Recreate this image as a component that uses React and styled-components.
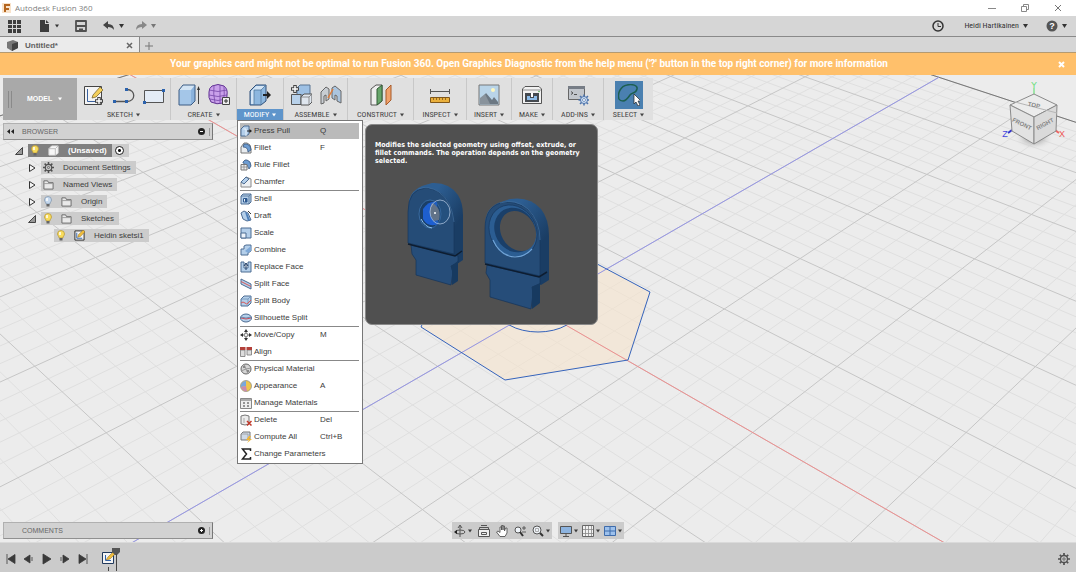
import React from "react";
import styled, { createGlobalStyle, css } from "styled-components";

const GlobalStyle = createGlobalStyle`
    *{
        box-sizing:border-box;
    }
    body{
        margin:0;
        font-family:"Liberation Sans", Arial, sans-serif;
        font-size:8px;
        line-height:12px;
        color:#3c3c3c;
        background-color:#ececec;
    }
    button{
        font:inherit;
        color:inherit;
        border:0;
        padding:0;
        margin:0;
        background:none;
        display:flex;
        align-items:center;
        cursor:pointer;
    }
    svg{
        display:block;
        flex:none;
    }
    ul{
        list-style:none;
        margin:0;
        padding:0;
    }
`;

const Window = styled.div`
    display:flex;
    flex-direction:column;
    min-height:100vh;
`;

const TitleBar = styled.header`
    display:flex;
    align-items:center;
    gap:4px;
    height:16px;
    padding:0 14px 0 2px;
    background-color:#ffffff;
`;

const AppName = styled.h1`
    flex:1;
    margin:0;
    font-family:"Open Sans", "Noto Sans", sans-serif;
    font-size:8px;
    font-weight:400;
    color:#808080;
`;

const WindowButtons = styled.div`
    display:flex;
    gap:25px;
`;

const AppBar = styled.div`
    display:flex;
    align-items:center;
    height:21px;
    padding:0 9px 0 8px;
    background-color:#d6d6d6;
    border-bottom:1px solid #8a8a8a;
`;

const QuickButton = styled.button`
    gap:4px;
    margin-right:${props => props.$after || 0}px;
    color:${props => (props.$faded ? "#777777" : "#333333")};
`;

const UserName = styled.span`
    font-family:"Liberation Sans Narrow", "Roboto Condensed", "Liberation Sans", sans-serif;
    font-size:8px;
`;

const Spacer = styled.div`
    flex:1;
`;

const TabBar = styled.div`
    display:flex;
    height:15px;
    background-color:#d6d6d6;
`;

const Tab = styled.div`
    display:flex;
    align-items:center;
    gap:7px;
    width:140px;
    padding:2px 6px 0 7px;
    font-weight:700;
    color:#606060;
    background-color:#ebebeb;
    border-right:1px solid #888888;
`;

const TabName = styled.span`
    flex:1;
`;

const NewTab = styled.button`
    padding:2px 5px 0 5px;
`;

const Banner = styled.div`
    display:flex;
    align-items:center;
    height:23px;
    padding-right:11px;
    color:#ffffff;
    background-color:#ffc06b;
    border-top:1px solid #b59a70;
`;

const BannerText = styled.p`
    flex:1;
    margin:0;
    text-align:center;
    font-family:Roboto, "Liberation Sans", sans-serif;
    font-size:10px;
    font-weight:700;
`;

const Canvas = styled.main`
    position:relative;
    display:flex;
    flex-direction:column;
    flex:1;
    padding:3px;
    background-color:#ececec;
`;

const Scene = styled.svg`
    position:absolute;
    inset:0;
    width:100%;
    height:100%;
`;

const CubeBox = styled.div`
    position:absolute;
    top:3px;
    right:6px;
`;

const Toolbar = styled.nav`
    position:relative;
    z-index:2;
    display:flex;
    align-self:flex-start;
    height:42px;
    background-color:#e0e0e0;
`;

const Workspace = styled.button`
    gap:6px;
    width:74px;
    padding-left:5px;
    font-size:7px;
    font-weight:700;
    color:#ffffff;
    background-color:#a9a9a9;
`;

const WorkspaceName = styled.span`
    padding-left:9px;
`;

const Group = styled.div`
    position:relative;
    display:flex;
    flex-direction:column;
    align-items:stretch;
    width:${props => props.$width}px;
    border-right:1px solid #c8c8c8;
    &:last-of-type{
        border-right:0;
    }
`;

const Tools = styled.div`
    display:flex;
    justify-content:center;
    align-items:center;
    gap:8px;
    height:31px;
    padding-top:2px;
`;

const Tool = styled.button`
    justify-content:center;
    width:22px;
    height:22px;
    ${props => props.$active && css`
        width:28px;
        height:28px;
        background-color:#4a80b0;
    `}
`;

const GroupLabel = styled.button`
    justify-content:center;
    gap:3px;
    height:11px;
    font-family:"Liberation Sans Narrow", "Roboto Condensed", "Liberation Sans", sans-serif;
    font-size:8px;
    line-height:11px;
    color:${props => (props.$open ? "#ffffff" : "#444444")};
    background-color:${props => (props.$open ? "#5f95cb" : "transparent")};
`;

const Menu = styled.ul`
    position:absolute;
    top:100%;
    left:0;
    width:126px;
    padding:1px 3px 1px 2px;
    background-color:#ffffff;
    border:1px solid #777777;
`;

const MenuItem = styled.li`
    height:17px;
    border-top:1px solid ${props => (props.$divided ? "#888888" : "transparent")};
    background-color:${props => (props.$active ? "#bababa" : "transparent")};
    background-clip:padding-box;
`;

const MenuButton = styled.button`
    gap:2px;
    width:100%;
    height:16px;
`;

const MenuText = styled.span`
    width:64px;
    white-space:nowrap;
    text-align:left;
`;

const Tooltip = styled.div`
    position:absolute;
    top:3px;
    left:127px;
    width:233px;
    height:201px;
    padding:16px 9px 0;
    color:#ffffff;
    background-color:#505050;
    border:1px solid #8a8a8a;
    border-radius:7px;
`;

const TooltipText = styled.p`
    margin:0 0 13px;
    font-family:"DejaVu Sans Condensed", "DejaVu Sans", sans-serif;
    font-size:7px;
    font-weight:700;
    line-height:8px;
`;

const PanelBar = styled.div`
    position:relative;
    display:flex;
    align-items:center;
    width:210px;
    height:17px;
    padding:0 0 0 3px;
    gap:4px;
    color:#666666;
    background-color:#d2d2d2;
    border:1px solid #b0b0b0;
    border-right-color:#777777;
    border-bottom-color:#909090;
`;

const PanelTitle = styled.h2`
    flex:1;
    margin:0;
    padding-left:${props => (props.$inset ? "15px" : "4px")};
    font-size:7px;
    font-weight:400;
`;

const Grip = styled.span`
    width:3px;
    height:8px;
    border-left:1px solid #999999;
`;

const Browser = styled.section`
    position:relative;
    margin-top:3px;
`;

const Tree = styled.ul`
    display:flex;
    flex-direction:column;
    gap:4px;
    padding:4px 0 0 12px;
`;

const TreeRow = styled.li`
    display:flex;
    align-items:center;
    height:13px;
    padding-left:${props => props.$level * 13}px;
`;

const Toggle = styled.button`
    justify-content:center;
    width:13px;
    height:13px;
    padding-right:5px;
`;

const Node = styled.div`
    display:flex;
    align-items:center;
    height:13px;
    padding:0 5px 0 2px;
    gap:8px;
    background-color:#cccccc;
    ${props => props.$root && css`
        font-weight:700;
        color:#ffffff;
        background-color:#808080;
    `}
`;

const NodeName = styled.span`
    padding-left:1px;
`;

const RootState = styled.label`
    display:flex;
    align-items:center;
    height:13px;
    padding:0 5px 0 3px;
    background-color:#cccccc;
`;

const Radio = styled.input`
    appearance:none;
    width:9px;
    height:9px;
    margin:0;
    border:1px solid #222222;
    border-radius:50%;
    background:radial-gradient(#111111 0 1px, #ffffff 2px);
`;

const CanvasFooter = styled.div`
    position:relative;
    display:flex;
    align-items:center;
    margin-top:auto;
`;

const NavBars = styled.div`
    display:flex;
    gap:6px;
    margin-left:239px;
`;

const NavBar = styled.div`
    display:flex;
    align-items:center;
    justify-content:space-between;
    height:17px;
    padding:0 2px;
    gap:${props => props.$gap}px;
    background-color:#cbcbcb;
`;

const NavButton = styled.button`
    gap:2px;
`;

const Timeline = styled.footer`
    display:flex;
    align-items:center;
    height:30px;
    padding:3px 6px 0 5px;
    background-color:#cbcbcb;
    border-top:1px solid #dadada;
`;

const Playback = styled.div`
    display:flex;
    gap:6px;
    margin-right:12px;
`;

/* ground grid: origin and the two vanishing points of its axes */
const ORIGIN = [537.5, 308.8];
const VANISH_X = [-939, -540];
const VANISH_Z = [1957, -510];

const project = (x, z) => {
    const a = x * -0.0636;
    const b = z * 0.0657;
    const w = 1 + a + b;
    return [0, 1].map(i => ((a * VANISH_X[i] + b * VANISH_Z[i] + ORIGIN[i]) / w).toFixed(1));
};

const gridPath = major => {
    let d = "";
    for (let i = -30; i <= 30; i++) {
        if ((i % 5 === 0) === major) {
            const n = i / 5;
            d += `M${project(n, -6)}L${project(n, 6)}M${project(-6, n)}L${project(6, n)}`;
        }
    }
    return d;
};

const MINOR = gridPath(false);
const MAJOR = gridPath(true);

const Ground = () => (
    <Scene viewBox="0 75 1076 467" preserveAspectRatio="xMinYMin slice" fill="none" aria-hidden="true">
        <path d={MINOR} stroke="#dfdfdf" />
        <path d={MAJOR} stroke="#c6c6c6" />
        <path d={`M${project(-6, -6)}L${project(-6, 6)}L${project(6, 6)}`} stroke="#777777" />
        <path d="M650 292L628 360L505 380L421 327L450 262L567 248Z" fill="#f7e3cb" fillOpacity="0.55" />
        <path d={`M${project(-6, 0)}L${project(6, 0)}`} stroke="#ee9090" />
        <path d={`M${project(0, -6)}L${project(0, 6)}`} stroke="#9696e6" />
        <path d="M650 292L628 360L505 380L421 327L450 262L567 248Z" stroke="#3563bb" />
        <ellipse cx="538" cy="309" rx="40" ry="23" stroke="#3563bb" />
    </Scene>
);

const ViewCube = () => (
    <CubeBox>
        <svg width="70" height="75" viewBox="1000 78 70 75" fontFamily="Liberation Sans, sans-serif">
            <defs>
                <radialGradient id="cubeShade">
                    <stop offset="0" stopColor="#777777" />
                    <stop offset="1" stopColor="#ececec" stopOpacity="0" />
                </radialGradient>
            </defs>
            <ellipse cx="1034" cy="138" rx="20" ry="12" fill="url(#cubeShade)" />
            <path d="M1034 94V88" stroke="#55dd66" />
            <path d="M1012 130L1008 133" stroke="#3333cc" strokeWidth="2" />
            <path d="M1055 130L1059 133" stroke="#ee6666" strokeWidth="2" />
            <g stroke="#8a8a8a" strokeLinejoin="round">
                <path d="M1034 94L1057 105L1034 117L1010 105Z" fill="#ececec" />
                <path d="M1010 105L1034 117V144L1012 131Z" fill="#e2e2e2" />
                <path d="M1057 105L1034 117V144L1056 131Z" fill="#dadada" />
            </g>
            <path d="M1015 102L1057 113" stroke="#b5b5b5" />
            <g fontSize="6" fill="#858585" fontWeight="700" textAnchor="middle">
                <text x="1022" y="126" transform="rotate(26 1022 124)">FRONT</text>
                <text x="1045" y="126" transform="rotate(-28 1045 124)">RIGHT</text>
                <text x="1034" y="107" transform="rotate(12 1034 105)">TOP</text>
            </g>
            <g fontSize="9" textAnchor="middle">
                <text x="1034" y="88" fill="#66dd77">Y</text>
                <text x="1005" y="137" fill="#4444dd">Z</text>
                <text x="1062" y="137" fill="#ee5555">X</text>
            </g>
        </svg>
    </CubeBox>
);

const Caret = ({ size = 5 }) => (
    <svg width={size} height="4" viewBox="0 0 5 4" fill="currentColor" aria-hidden="true">
        <path d="M0 0H5L2.500 4Z" />
    </svg>
);

const Icon = ({ size = 12, box = 12, children }) => (
    <svg width={size} height={size} viewBox={`0 0 ${box} ${box}`} fill="none" strokeLinejoin="round" aria-hidden="true">
        {children}
    </svg>
);

/* toolbar drawings, on a 22px box */
const toolIcons = {
    "Create Sketch": (
        <>
            <path d="M1.500 2.500H18.500V20.500H1.500Z" fill="#f4f4f4" stroke="#444444" />
            <path d="M4.500 5V17.500H16" stroke="#3a62a0" />
            <path d="M9 14L10 11L17 3L20 6L13 13Z" fill="#f3cf5b" stroke="#6b5a28" strokeWidth="0.7" />
            <path d="M16 13V21M12 17H20" stroke="#444444" strokeWidth="3.500" />
            <path d="M16 14V20M13 17H19" stroke="#ffffff" strokeWidth="1.500" />
        </>
    ),
    "Arc": (
        <>
            <path d="M2 17.500H14C23 17.500 23 5.500 14 5.500" stroke="#555555" strokeWidth="1.300" />
            <path d="M0 16H3V19H0ZM12 16H15V19H12ZM12 4H15V7H12Z" fill="#2b62ad" />
        </>
    ),
    "Rectangle": (
        <>
            <path d="M1.500 6.500H20.500V18.500H1.500Z" fill="#e4ecf6" stroke="#555555" />
            <path d="M0 17H3V20H0ZM19 5H22V8H19Z" fill="#2b62ad" />
        </>
    ),
    "Extrude": (
        <>
            <path d="M1 6H13V21L17 17V1H5Z" fill="#8ab2dc" />
            <path d="M1 6H13L17 1H5Z" fill="#d3e4f4" />
            <path d="M1 6H13V21H1Z" fill="#a4c6e8" />
            <path d="M1 6L5 1H17V17L13 21H1Z" stroke="#3c5c84" />
            <path d="M20.500 20V5" stroke="#444444" />
            <path d="M19 6L20.500 2L22 6Z" fill="#333333" />
        </>
    ),
    "Create Form": (
        <>
            <path d="M4 2Q10 -1 16 2Q20 5 19 11Q19 18 15 19Q9 21 3 18Q0 14 1 8Q1 4 4 2Z" fill="#c9a0ea" stroke="#613392" />
            <path d="M6 1Q5 10 7 19M12 1Q12 10 12 20M16 2Q17 10 15 19M1 6Q10 9 19 6M1 11Q10 14 19 11M2 15Q10 18 18 15" stroke="#7648a8" strokeWidth="0.8" />
            <path d="M14.500 13.500H21.500V20.500H14.500Z" fill="#eeeeee" stroke="#444444" />
            <path d="M16 17H20M18 15V19" stroke="#333333" />
        </>
    ),
    "Press Pull": (
        <>
            <path d="M1 7L7 1H17V17L12 21H1Z" fill="#8db7df" stroke="#2f4f78" />
            <path d="M2 7L7 2H16L12 6H5V20H2Z" fill="#d4e5f5" />
            <path d="M5 6H12V21M12 6L17 1M5 6V21" stroke="#52789f" strokeWidth="0.8" />
            <path d="M14 10H18V7L22 11L18 15V12H14Z" fill="#222222" />
        </>
    ),
    "New Component": (
        <>
            <path d="M7 4L10 1H20V11H7Z" fill="#9dc0e4" stroke="#5a7492" />
            <path d="M1.500 10.500H11V20.500H1.500Z" fill="#b8d1ea" stroke="#555555" />
            <path d="M11 13L14 10H22V18L19 21H11Z" fill="#dfe6ee" stroke="#555555" />
            <path d="M11 13H19V21M19 13L22 10" stroke="#777777" strokeWidth="0.8" />
            <path d="M5 1V9M1 5H9" stroke="#444444" strokeWidth="3.500" />
            <path d="M5 2V8M2 5H8" stroke="#ffffff" strokeWidth="1.500" />
        </>
    ),
    "Joint": (
        <>
            <path d="M1 8L6 3L9 5V15L6 17V11L4 12V19L1 20Z" fill="#c8cdd2" stroke="#666666" />
            <path d="M12 4L15 2L21 7V19L17 17V12L15 11V16L12 14Z" fill="#abc5df" stroke="#666666" />
            <path d="M8 14L13 5" stroke="#de7c3b" strokeWidth="1.500" />
        </>
    ),
    "Offset Plane": (
        <>
            <path d="M1 5L6 1H12V17L7 21H1Z" fill="#eeeeee" stroke="#555555" />
            <path d="M7 5L12 1V17L7 21Z" fill="#67a66b" stroke="#335c37" />
            <path d="M16 6L21 1V16L16 21Z" fill="#f0a26b" stroke="#a75b2b" />
        </>
    ),
    "Measure": (
        <>
            <path d="M1.500 5V10M20.500 5V10M1 7.500H21" stroke="#555555" />
            <path d="M1.500 13.500H20.500V18.500H1.500Z" fill="#eab03c" stroke="#80571b" />
            <path d="M4.500 14V16M7.500 14V16M10.500 14V16M13.500 14V16M16.500 14V16" stroke="#80571b" strokeWidth="0.8" />
        </>
    ),
    "Insert Image": (
        <>
            <path d="M1 1H21V21H1Z" fill="#b9d4e8" stroke="#777777" />
            <path d="M2 17L8 9L14 16L16 13L20 18V20H2Z" fill="#6c7883" />
            <path d="M2 14L7 10L12 20H2Z" fill="#89939c" />
            <circle cx="15" cy="6" r="2" fill="#fdf7c0" />
        </>
    ),
    "3D Print": (
        <>
            <path d="M1.500 5L4 2.500H18L20.500 5V19.500H1.500Z" fill="#f2f2f2" stroke="#555555" />
            <path d="M2 6H20" stroke="#777777" strokeWidth="0.8" />
            <path d="M4 9H18V18H4Z" fill="#454a50" />
            <path d="M6 12H9V14H13V12H16V16H6Z" fill="#8cbbe8" />
            <path d="M10 9H12V13H10Z" fill="#ffffff" />
            <circle cx="18" cy="7.500" r="0.800" fill="#55aa55" />
        </>
    ),
    "Scripts and Add-Ins": (
        <>
            <path d="M1.500 2.500H17.500V15.500H1.500Z" fill="#c2c6cc" stroke="#666666" />
            <path d="M1 2H18V5H1Z" fill="#777d86" />
            <path d="M4 7.500L6 9L4 10.500M7 10.500H10" stroke="#444444" strokeWidth="0.9" />
            <path d="M17 10.500V21.500M11.500 16H22.500M13 12L21 20M21 12L13 20" stroke="#4a72ac" strokeWidth="1.500" />
            <circle cx="17" cy="16" r="3.500" fill="#d5e4f5" stroke="#4a72ac" />
            <circle cx="17" cy="16" r="1.500" fill="#ffffff" stroke="#4a72ac" strokeWidth="0.7" />
        </>
    ),
    "Select": (
        <>
            <path d="M1 15C-1 9 3 2 9 1C14 0 20 1 19 5C18 10 14 8 12 11C10 14 8 17 5 17C3 17 2 17 1 15Z" stroke="#1d5f50" strokeWidth="1.500" />
            <path d="M16 10V20L18 18L20 22L22 21L20 17H23Z" fill="#ffffff" stroke="#222222" strokeWidth="0.7" />
        </>
    )
};

const blue = { fill: "#b4cfea", stroke: "#4d6c92" };

/* menu drawings, on a 12px box */
const menuIcons = {
    pull: (
        <>
            <path d="M1 4L4 1H9V9L6 11H1Z" {...blue} />
            <path d="M3.500 4H6V11" stroke="#e8f2fc" />
            <path d="M7 5.500H9.500V4L12 6L9.500 8V6.500H7Z" fill="#222222" />
        </>
    ),
    fillet: (
        <>
            <path d="M1 5L4 1H7Q11 2 11 7V11H1Z" fill="#e8ecf0" stroke="#777777" />
            <path d="M4 2H7Q11 3 11 8L8 10Q8 5 3 5Z" fill="#6d9cd2" stroke="#38577c" strokeWidth="0.8" />
        </>
    ),
    rule: (
        <>
            <path d="M3 3L5 1H7Q11 2 11 7L9 10Q8 5 3 4Z" fill="#6d9cd2" stroke="#38577c" strokeWidth="0.8" />
            <path d="M1 5.500H7V11H1Z" fill="#eeeeee" stroke="#777777" />
            <path d="M1 8H7M4 6V11" stroke="#888888" strokeWidth="0.8" />
        </>
    ),
    chamfer: (
        <>
            <path d="M1 6L6 1L11 3V11H1Z" fill="#edf0f3" stroke="#888888" />
            <path d="M1 6L6 1L9 3L4 8Z" {...blue} />
        </>
    ),
    shell: (
        <>
            <path d="M1 3L3 1H11V9L9 11H1Z" {...blue} />
            <path d="M3.500 5.500H7V9H3.500Z" fill="#eef4fb" stroke="#2d588e" />
            <path d="M9 3V11M1 3H9L11 1" stroke="#4d6c92" strokeWidth="0.8" />
            <path d="M5 6H7V9H5Z" fill="#2d588e" />
        </>
    ),
    draft: (
        <>
            <path d="M1 3L4 1L8 3L11 10L7 11L3 9Z" {...blue} />
            <path d="M5 2L8 11L10 10L7 3Z" fill="#4d7fb9" />
            <path d="M8 1L11 4" stroke="#333333" />
        </>
    ),
    scale: (
        <>
            <path d="M1 1H11V11H1Z" {...blue} />
            <path d="M1 6H6V11H1Z" fill="#eef4fb" stroke="#4d6c92" />
        </>
    ),
    combine: (
        <>
            <path d="M4 2L6 1H11V7L8 9V11H1V5H4Z" {...blue} />
            <path d="M5 7L11 2V7L8 9Z" fill="#7fa9d8" />
        </>
    ),
    replace: (
        <>
            <path d="M1 1H4V7H8V1H11V11H1Z" {...blue} />
            <path d="M6 9V3M4 5L6 2L8 5" stroke="#1d3a63" />
        </>
    ),
    splitFace: (
        <>
            <path d="M1 1L11 6V11L1 6Z" {...blue} />
            <path d="M1 3.500L11 8.500" stroke="#d65a5a" />
        </>
    ),
    splitBody: (
        <>
            <path d="M1 4L4 1H11V8L8 11H1Z" {...blue} />
            <path d="M1 4H8L11 1M8 4V11" stroke="#6d8fb5" strokeWidth="0.8" />
            <path d="M1 8Q3 6 5 8T8 8L11 5" stroke="#d65a5a" />
        </>
    ),
    silhouette: (
        <>
            <ellipse cx="6" cy="6" rx="5.500" ry="4" {...blue} />
            <path d="M1 6Q6 8 11 6" stroke="#cc4f5c" />
            <path d="M1 5Q6 7 11 5" stroke="#4d6c92" strokeWidth="0.7" />
        </>
    ),
    move: (
        <>
            <path d="M6 0L8 3H4ZM6 12L4 9H8ZM0 6L3 4V8ZM12 6L9 8V4Z" fill="#333333" />
            <path d="M6 2V10M2 6H10" stroke="#333333" strokeWidth="0.8" />
            <path d="M4.500 4.500H7.500V7.500H4.500Z" fill="#eeeeee" stroke="#777777" strokeWidth="0.7" />
        </>
    ),
    align: (
        <>
            <path d="M0.500 4H5V10.500H0.500ZM7 4H11.500V9H7Z" fill="#dddddd" stroke="#777777" strokeWidth="0.8" />
            <path d="M0 1H5.500V4H0ZM6.500 1H12V4H6.500Z" fill="#b3403a" />
        </>
    ),
    physical: (
        <>
            <circle cx="6" cy="6" r="5" fill="#d5d5d5" stroke="#666666" />
            <path d="M4 1L6 6L1 8M6 6L11 5M6 6L8 11" stroke="#999999" />
            <path d="M3 3H5V5H3ZM7 7H9V9H7Z" fill="#888888" />
        </>
    ),
    appearance: (
        <>
            <circle cx="6" cy="6" r="5.500" fill="#efc64d" stroke="#888888" strokeWidth="0.7" />
            <path d="M6 6V1A5 5 0 0 0 1 7Z" fill="#7aa7dc" />
            <path d="M6 6L1 7A5 5 0 0 0 7 11Z" fill="#c98bb0" />
        </>
    ),
    manage: (
        <>
            <path d="M0.500 1.500H11.500V11.500H0.500Z" fill="#eeeeee" stroke="#888888" />
            <path d="M1 3H11" stroke="#aaaaaa" strokeWidth="2" />
            <path d="M3 6H5M7 6H9M3 9H5M7 9H9" stroke="#777777" strokeWidth="1.500" />
        </>
    ),
    remove: (
        <>
            <path d="M1 2Q5 0 9 2V10Q5 12 1 10Z" fill="#ececec" stroke="#777777" />
            <path d="M4 4V9" stroke="#aaaaaa" />
            <path d="M7 7L11.500 11.500M11.500 7L7 11.500" stroke="#c0392b" strokeWidth="1.500" />
        </>
    ),
    compute: (
        <>
            <path d="M1 3L3 1H10V8L8 9H1Z" fill="#cfdae8" stroke="#777777" />
            <path d="M1 3H8V9" stroke="#999999" strokeWidth="0.8" />
            <path d="M9 5L6 9H9L7 12L12 8H9L11 5Z" fill="#f2b632" />
        </>
    ),
    sigma: <path d="M10.500 3V1H2.500L6.500 6L2.500 11H10.500V9" stroke="#222222" strokeWidth="1.500" strokeLinejoin="miter" />
};

const menuItems = [
    { icon: "pull", text: "Press Pull", keys: "Q", active: true },
    { icon: "fillet", text: "Fillet", keys: "F" },
    { icon: "rule", text: "Rule Fillet" },
    { icon: "chamfer", text: "Chamfer" },
    { icon: "shell", text: "Shell", divided: true },
    { icon: "draft", text: "Draft" },
    { icon: "scale", text: "Scale" },
    { icon: "combine", text: "Combine" },
    { icon: "replace", text: "Replace Face" },
    { icon: "splitFace", text: "Split Face" },
    { icon: "splitBody", text: "Split Body" },
    { icon: "silhouette", text: "Silhouette Split" },
    { icon: "move", text: "Move/Copy", keys: "M", divided: true },
    { icon: "align", text: "Align" },
    { icon: "physical", text: "Physical Material", divided: true },
    { icon: "appearance", text: "Appearance", keys: "A" },
    { icon: "manage", text: "Manage Materials" },
    { icon: "remove", text: "Delete", keys: "Del", divided: true },
    { icon: "compute", text: "Compute All", keys: "Ctrl+B" },
    { icon: "sigma", text: "Change Parameters" }
];

const groups = [
    { name: "SKETCH", width: 94, tools: ["Create Sketch", "Arc", "Rectangle"] },
    { name: "CREATE", width: 66, tools: ["Extrude", "Create Form"] },
    { name: "MODIFY", width: 47, tools: ["Press Pull"], open: true },
    { name: "ASSEMBLE", width: 64, tools: ["New Component", "Joint"] },
    { name: "CONSTRUCT", width: 66, tools: ["Offset Plane"] },
    { name: "INSPECT", width: 53, tools: ["Measure"] },
    { name: "INSERT", width: 45, tools: ["Insert Image"] },
    { name: "MAKE", width: 41, tools: ["3D Print"] },
    { name: "ADD-INS", width: 51, tools: ["Scripts and Add-Ins"] },
    { name: "SELECT", width: 49, tools: ["Select"] }
];

const Bulb = ({ off }) => (
    <svg width="10" height="11" viewBox="0 0 10 11" aria-hidden="true">
        <path d="M5 0.500Q8.500 0.500 8.500 4Q8.500 5 7 7V8H3V7Q1.500 5 1.500 4Q1.500 0.500 5 0.500Z" fill={off ? "#c6d9ee" : "#f8dc5c"} stroke={off ? "#8397ad" : "#b99a3c"} strokeWidth="0.8" />
        <path d="M4 2V5" stroke="#ffffff" strokeWidth="1.500" />
        <path d="M3.500 8H6.500V10.500H3.500Z" fill="#666666" />
    </svg>
);

const Folder = () => (
    <Icon size={11}>
        <path d="M1 11V2H5L6 4H11V11Z" fill="#e9e9e9" stroke="#666666" />
        <path d="M1 5H11" stroke="#999999" />
    </Icon>
);

const Body = () => (
    <Icon size={11}>
        <path d="M1 4L4 1H11V9L8 11H1Z" fill="#f6f6f6" stroke="#dddddd" />
        <path d="M8 4V11M8 4L11 1M1 4H8" stroke="#bbbbbb" />
    </Icon>
);

const Gear = ({ size = 11 }) => (
    <Icon size={size}>
        <path d="M6 0V2.500M6 9.500V12M0 6H2.500M9.500 6H12M1.800 1.800L3.500 3.500M8.500 8.500L10.200 10.200M10.200 1.800L8.500 3.500M3.500 8.500L1.800 10.200" stroke="#505050" strokeWidth="1.700" />
        <circle cx="6" cy="6" r="3.500" stroke="#505050" strokeWidth="1.300" />
        <circle cx="6" cy="6" r="1.200" stroke="#505050" strokeWidth="0.8" />
    </Icon>
);

const SketchIcon = ({ size = 12 }) => (
    <Icon size={size}>
        <path d="M1 1H11V11H1Z" fill="#f4f4f4" stroke="#222222" />
        <path d="M3 3V9H9" stroke="#2f62aa" />
        <path d="M4 8L5 5L10 0L12 2L7 7Z" fill="#f0bd3d" stroke="#83651e" strokeWidth="0.5" />
    </Icon>
);

const treeRows = [
    { name: "(Unsaved)", level: 0, toggle: "open", icons: [<Bulb />, <Body />], root: true },
    { name: "Document Settings", level: 1, toggle: "closed", icons: [<Gear />] },
    { name: "Named Views", level: 1, toggle: "closed", icons: [<Folder />] },
    { name: "Origin", level: 1, toggle: "closed", icons: [<Bulb off />, <Folder />] },
    { name: "Sketches", level: 1, toggle: "open", icons: [<Bulb />, <Folder />] },
    { name: "Heidin sketsi1", level: 2, icons: [<Bulb />, <SketchIcon size={11} />] }
];

const navView = [
    { name: "Orbit", caret: true, art: <><ellipse cx="6" cy="7" rx="5" ry="2" stroke="#555555" /><path d="M6 1V12M4 3L6 0L8 3" stroke="#555555" /><path d="M0 7L3 5V9Z" fill="#222222" /></> },
    { name: "Look At", art: <><path d="M0.500 4.500H11.500V11.500H0.500Z" fill="#eeeeee" stroke="#555555" /><path d="M3.500 7.500H8.500V9.500H3.500ZM1.500 4V2.500H10.500V4M3 0.500H9" stroke="#555555" /></> },
    { name: "Pan", art: <path d="M4 11.500L0.500 7L2 6L4 7.500V2H5.500V5V0.500H7V5V1H8.500V6L9.500 3H11V8L9 11.500Z" fill="#ffffff" stroke="#555555" strokeWidth="0.9" /> },
    { name: "Zoom", art: <><circle cx="4" cy="5" r="3" fill="#eef3f8" stroke="#555555" /><path d="M6 7L9 11" stroke="#333333" strokeWidth="2" /><path d="M8 3H12M10 1V5M8 7H12" stroke="#444444" strokeWidth="0.8" /></> },
    { name: "Fit", caret: true, art: <><circle cx="5" cy="5" r="4" fill="#eef3f8" stroke="#555555" /><path d="M3.500 3.500H6.500V6.500H3.500Z" stroke="#999999" strokeWidth="0.8" /><path d="M8 8L11 11" stroke="#333333" strokeWidth="2" /></> }
];

const navDisplay = [
    { name: "Display Settings", art: <><path d="M0.500 1.500H11.500V8.500H0.500Z" fill="#8db4e0" stroke="#555555" /><path d="M3 11.500H9M6 9V11" stroke="#555555" /></> },
    { name: "Grid and Snaps", art: <><path d="M0.500 0.500H11.500V11.500H0.500Z" fill="#f2f2f2" stroke="#666666" /><path d="M3.500 1V11M6.500 1V11M9.500 1V11M1 4.500H11M1 8.500H11" stroke="#888888" strokeWidth="0.8" /></> },
    { name: "Viewports", art: <><path d="M0.500 1.500H11.500V10.500H0.500Z" fill="#9dc1ec" stroke="#3f6cab" /><path d="M6 2V10M1 6H11" stroke="#3f6cab" /></> }
];

const playback = [
    { name: "First", d: "M2 1V11M3 6L10 1.500V10.500Z" },
    { name: "Step back", d: "M1 6L7 2V10ZM9 4V8" },
    { name: "Play", d: "M2 1L10 6L2 11Z" },
    { name: "Step forward", d: "M10 6L4 2V10ZM2 4V8" },
    { name: "Last", d: "M10 1V11M9 6L2 1.500V10.500Z" }
];

/* the bracket before and after the pull, side by side */
const Brackets = () => (
    <svg width="212" height="134" viewBox="375 178 212 134" role="img" aria-label="Press Pull preview">
        <defs>
            <linearGradient id="side" x1="0" y1="0" x2="1" y2="1">
                <stop offset="0.300" stopColor="#2d5e92" />
                <stop offset="0.700" stopColor="#1a3d64" />
            </linearGradient>
        </defs>
        <path d="M409 200Q412 190 422 186L432 183Q449 182 458 195Q463 203 463 215V260L457 264L411 245Z" fill="url(#side)" />
        <path d="M408 212Q408 189 426 188Q451 191 454 222V254L408 243Z" fill="#254c77" stroke="#17375c" strokeWidth="0.7" />
        <path d="M418 189Q428 185 439 192Q452 201 454 222" fill="none" stroke="#3f6c9b" strokeWidth="0.8" />
        <path d="M411 245L458 256V263L451 266L453 272L451 285L416 275V260L412 254Z" fill="#264d79" stroke="#14345a" strokeWidth="0.7" />
        <path d="M451 266L458 261V281L452 285V271Z" fill="#173a60" />
        <path d="M408 244L455 256L462 251" fill="none" stroke="#0e1d30" strokeWidth="1.500" />
        <ellipse cx="430" cy="214" rx="11" ry="14" fill="#1b3f68" stroke="#3f74ac" strokeWidth="0.8" />
        <path d="M423 209Q429 200 437 202L438 224Q428 228 423 219Z" fill="#1e5fd0" />
        <path d="M432 203Q442 208 439 220L434 221Q427 213 432 203Z" fill="#7d7f86" />
        <ellipse cx="440" cy="212" rx="10" ry="12" fill="#24588f" fillOpacity="0.3" stroke="#a9c0dc" strokeWidth="0.8" />
        <path d="M421 219Q425 227 432 228" fill="none" stroke="#8fc3ee" />
        <circle cx="435" cy="213" r="1" fill="#ffffff" />

        <path d="M485 225Q485 209 498 203L510 199Q530 196 541 209Q549 219 549 236V280L541 285L486 265Z" fill="url(#side)" />
        <path d="M485 229Q485 204 506 202Q538 203 540 240V276L485 263Z" fill="#254c77" stroke="#17375c" strokeWidth="0.7" />
        <path d="M500 203Q515 198 528 209Q540 221 540 240" fill="none" stroke="#3f6c9b" strokeWidth="0.8" />
        <ellipse cx="513" cy="231" rx="23" ry="27" fill="#2b5d92" stroke="#18395f" strokeWidth="0.7" transform="rotate(-30 513 231)" />
        <ellipse cx="515" cy="230" rx="20" ry="23" fill="#1a3f69" transform="rotate(-30 515 230)" />
        <ellipse cx="518" cy="231" rx="17" ry="21" fill="#505050" transform="rotate(-30 518 231)" />
        <path d="M493 240Q500 256 515 257Q525 257 532 249" fill="none" stroke="#6fa3d6" strokeWidth="1.200" />
        <path d="M487 265L540 277V284L532 287L533 294L531 309L490 297V280L486 273Z" fill="#264d79" stroke="#14345a" strokeWidth="0.7" />
        <path d="M532 287L540 283V303L532 309Z" fill="#173a60" />
        <path d="M485 264L539 277L547 272" fill="none" stroke="#0e1d30" strokeWidth="1.500" />
    </svg>
);

const ModifyMenu = () => (
    <Menu>
        {menuItems.map(item => (
            <MenuItem key={item.text} $active={item.active} $divided={item.divided}>
                <MenuButton>
                    <Icon>{menuIcons[item.icon]}</Icon>
                    <MenuText>{item.text}</MenuText>
                    <span>{item.keys}</span>
                </MenuButton>
            </MenuItem>
        ))}
        <Tooltip as="li" role="tooltip">
            <TooltipText>
                Modifies the selected geometry using offset, extrude, or fillet commands. The operation depends on the geometry selected.
            </TooltipText>
            <Brackets />
        </Tooltip>
    </Menu>
);

const App = () => (
    <Window>
        <GlobalStyle />
        <TitleBar>
            <svg width="9" height="10" viewBox="0 0 9 10" aria-hidden="true">
                <path d="M0 0H9V10H0Z" fill="#f9e3cb" />
                <path d="M2 9V1H8V3H4V5H7V7H4V9Z" fill="#b5651d" />
            </svg>
            <AppName>Autodesk Fusion 360</AppName>
            <WindowButtons>
                <button aria-label="Minimize"><Icon size={8} box={8}><path d="M0 4.500H8" stroke="#888888" /></Icon></button>
                <button aria-label="Restore"><Icon size={8} box={8}><path d="M0.500 2.500H5.500V7.500H0.500ZM2.500 2.500V0.500H7.500V5.500H6" stroke="#888888" /></Icon></button>
                <button aria-label="Close"><Icon size={8} box={8}><path d="M1 1L7 7M7 1L1 7" stroke="#777777" /></Icon></button>
            </WindowButtons>
        </TitleBar>

        <AppBar>
            <QuickButton aria-label="Data panel" $after={18}>
                <Icon size={13} box={13}>
                    <path d="M0 0H4V4H0ZM5 0H8V4H5ZM9 0H13V4H9ZM0 5H4V8H0ZM5 5H8V8H5ZM9 5H13V8H9ZM0 9H4V13H0ZM5 9H8V13H5ZM9 9H13V13H9Z" fill="#3d3d3d" />
                </Icon>
            </QuickButton>
            <QuickButton aria-label="File" $after={16}>
                <Icon><path d="M1 0H6V4H10V12H1Z" fill="#3d3d3d" /><path d="M7 0L10 3H7Z" fill="#3d3d3d" /></Icon>
                <Caret size={4} />
            </QuickButton>
            <QuickButton aria-label="Save" $after={16}>
                <Icon><path d="M1 1H11V11H1Z" stroke="#505050" strokeWidth="1.800" /><path d="M1 6H11M4 9.500H8" stroke="#505050" strokeWidth="1.800" /></Icon>
            </QuickButton>
            <QuickButton aria-label="Undo" $after={11}>
                <Icon><path d="M0 5L5 1V4Q11 4 11 10Q9 7 5 7V9Z" fill="#444444" /></Icon>
                <Caret />
            </QuickButton>
            <QuickButton aria-label="Redo" $faded>
                <Icon><path d="M12 5L7 1V4Q1 4 1 10Q3 7 7 7V9Z" fill="#888888" /></Icon>
                <Caret />
            </QuickButton>
            <Spacer />
            <QuickButton aria-label="Job status" $after={20}>
                <Icon><circle cx="6" cy="6" r="5" stroke="#333333" strokeWidth="1.500" /><path d="M6 3V6.500H9" stroke="#333333" /></Icon>
            </QuickButton>
            <QuickButton $after={18}>
                <UserName>Heidi Hartikainen</UserName>
                <Caret />
            </QuickButton>
            <QuickButton aria-label="Help">
                <svg width="12" height="12" viewBox="0 0 12 12" aria-hidden="true">
                    <circle cx="6" cy="6" r="5.500" fill="#555555" />
                    <text x="6" y="9" fontSize="9" fontWeight="700" textAnchor="middle" fill="#ffffff">?</text>
                </svg>
                <Caret />
            </QuickButton>
        </AppBar>

        <TabBar>
            <Tab>
                <svg width="11" height="11" viewBox="0 0 11 11" aria-hidden="true">
                    <path d="M0 2L6 0L11 2V8L5 11L0 8Z" fill="#777777" />
                    <path d="M5 4L11 2V8L5 11Z" fill="#444444" />
                </svg>
                <TabName>Untitled*</TabName>
                <button aria-label="Close tab"><Icon size={7} box={7}><path d="M1 1L6 6M6 1L1 6" stroke="#666666" strokeWidth="1.500" /></Icon></button>
            </Tab>
            <NewTab aria-label="New tab"><Icon size={8} box={8}><path d="M4 0V8M0 4H8" stroke="#777777" /></Icon></NewTab>
        </TabBar>

        <Banner role="alert">
            <BannerText>
                Your graphics card might not be optimal to run Fusion 360. Open Graphics Diagnostic from the help menu ('?' button in the top right corner) for more information
            </BannerText>
            <button aria-label="Dismiss"><Icon size={7} box={7}><path d="M1 1L6 6M6 1L1 6" stroke="#ffffff" strokeWidth="2" /></Icon></button>
        </Banner>

        <Canvas>
            <Ground />
            <ViewCube />
            <Toolbar>
                <Workspace>
                    <svg width="4" height="17" viewBox="0 0 4 17" aria-hidden="true"><path d="M0.500 0V17M3.500 0V17" stroke="#8a8a8a" /></svg>
                    <WorkspaceName>MODEL</WorkspaceName>
                    <Caret size={4} />
                </Workspace>
                {groups.map(group => (
                    <Group key={group.name} $width={group.width}>
                        <Tools>
                            {group.tools.map(tool => (
                                <Tool key={tool} aria-label={tool} $active={tool === "Select"}>
                                    <Icon size={22} box={22}>{toolIcons[tool]}</Icon>
                                </Tool>
                            ))}
                        </Tools>
                        <GroupLabel $open={group.open}>
                            {group.name}
                            <Caret size={4} />
                        </GroupLabel>
                        {group.open && <ModifyMenu />}
                    </Group>
                ))}
            </Toolbar>

            <Browser>
                <PanelBar>
                    <button aria-label="Collapse"><Icon size={7} box={7}><path d="M3 1V6L0 3.500ZM7 1V6L4 3.500Z" fill="#222222" /></Icon></button>
                    <PanelTitle>BROWSER</PanelTitle>
                    <button aria-label="Hide all"><Icon size={7} box={7}><circle cx="3.500" cy="3.500" r="3.500" fill="#222222" /><path d="M2 3.500H5" stroke="#ffffff" /></Icon></button>
                    <Grip />
                </PanelBar>
                <Tree>
                    {treeRows.map(row => (
                        <TreeRow key={row.name} $level={row.level}>
                            {row.toggle ? (
                                <Toggle aria-label={`Toggle ${row.name}`}>
                                    <Icon size={8} box={8}>
                                        {row.toggle === "open"
                                            ? <path d="M7.500 0.500V7.500H0.500Z" fill="#999999" stroke="#444444" />
                                            : <path d="M1.500 0.500V7.500L7 4Z" fill="#f4f4f4" stroke="#333333" />}
                                    </Icon>
                                </Toggle>
                            ) : <Toggle as="span" />}
                            <Node $root={row.root}>
                                {row.icons.map((icon, i) => <React.Fragment key={i}>{icon}</React.Fragment>)}
                                <NodeName>{row.name}</NodeName>
                            </Node>
                            {row.root && <RootState><Radio type="radio" defaultChecked aria-label="Activate" /></RootState>}
                        </TreeRow>
                    ))}
                </Tree>
            </Browser>

            <CanvasFooter>
                <PanelBar>
                    <PanelTitle $inset>COMMENTS</PanelTitle>
                    <button aria-label="Add comment"><Icon size={7} box={7}><circle cx="3.500" cy="3.500" r="3.500" fill="#222222" /><path d="M2 3.500H5M3.500 2V5" stroke="#ffffff" /></Icon></button>
                    <Grip />
                </PanelBar>
                <NavBars>
                    <NavBar $gap={6}>
                        {navView.map(item => (
                            <NavButton key={item.name} aria-label={item.name}>
                                <Icon>{item.art}</Icon>
                                {item.caret && <Caret size={4} />}
                            </NavButton>
                        ))}
                    </NavBar>
                    <NavBar $gap={4}>
                        {navDisplay.map(item => (
                            <NavButton key={item.name} aria-label={item.name}>
                                <Icon>{item.art}</Icon>
                                <Caret size={4} />
                            </NavButton>
                        ))}
                    </NavBar>
                </NavBars>
            </CanvasFooter>
        </Canvas>

        <Timeline>
            <Playback>
                {playback.map(item => (
                    <button key={item.name} aria-label={item.name}>
                        <Icon><path d={item.d} fill="#3a3a3a" stroke="#3a3a3a" strokeWidth="0.8" /></Icon>
                    </button>
                ))}
            </Playback>
            <button aria-label="Sketch1">
                <svg width="20" height="24" viewBox="101 549 20 24" fill="none" aria-hidden="true">
                    <path d="M102.500 554.500H113.500V565.500H102.500Z" fill="#f4f4f4" stroke="#223a5c" />
                    <path d="M105.500 557V562.500H111" stroke="#2f62aa" />
                    <path d="M106 562L108 559L113 554L115 556L110 561Z" fill="#f0bd3d" stroke="#83651e" strokeWidth="0.5" />
                    <path d="M112 550H120V554L117 557H115L112 554Z" fill="#555555" />
                    <path d="M116.500 556V573M108.500 569V573" stroke="#444444" />
                </svg>
            </button>
            <Spacer />
            <button aria-label="Timeline settings"><Gear size={12} /></button>
        </Timeline>
    </Window>
);

export default App;
